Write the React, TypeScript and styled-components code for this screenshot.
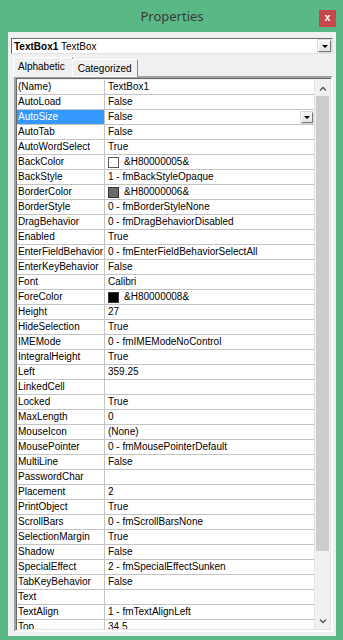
import styled, { createGlobalStyle } from 'styled-components';

const Global = createGlobalStyle`
  html, body { margin: 0; padding: 0; background: #5ab887; }
  * { box-sizing: border-box; }
`;

type Swatch = 'white' | 'gray' | 'black';
type Prop = { name: string; value: string; swatch?: Swatch; selected?: boolean };

const props: Prop[] = [
  { name: '(Name)', value: 'TextBox1' },
  { name: 'AutoLoad', value: 'False' },
  { name: 'AutoSize', value: 'False', selected: true },
  { name: 'AutoTab', value: 'False' },
  { name: 'AutoWordSelect', value: 'True' },
  { name: 'BackColor', value: '&H80000005&', swatch: 'white' },
  { name: 'BackStyle', value: '1 - fmBackStyleOpaque' },
  { name: 'BorderColor', value: '&H80000006&', swatch: 'gray' },
  { name: 'BorderStyle', value: '0 - fmBorderStyleNone' },
  { name: 'DragBehavior', value: '0 - fmDragBehaviorDisabled' },
  { name: 'Enabled', value: 'True' },
  { name: 'EnterFieldBehavior', value: '0 - fmEnterFieldBehaviorSelectAll' },
  { name: 'EnterKeyBehavior', value: 'False' },
  { name: 'Font', value: 'Calibri' },
  { name: 'ForeColor', value: '&H80000008&', swatch: 'black' },
  { name: 'Height', value: '27' },
  { name: 'HideSelection', value: 'True' },
  { name: 'IMEMode', value: '0 - fmIMEModeNoControl' },
  { name: 'IntegralHeight', value: 'True' },
  { name: 'Left', value: '359.25' },
  { name: 'LinkedCell', value: '' },
  { name: 'Locked', value: 'True' },
  { name: 'MaxLength', value: '0' },
  { name: 'MouseIcon', value: '(None)' },
  { name: 'MousePointer', value: '0 - fmMousePointerDefault' },
  { name: 'MultiLine', value: 'False' },
  { name: 'PasswordChar', value: '' },
  { name: 'Placement', value: '2' },
  { name: 'PrintObject', value: 'True' },
  { name: 'ScrollBars', value: '0 - fmScrollBarsNone' },
  { name: 'SelectionMargin', value: 'True' },
  { name: 'Shadow', value: 'False' },
  { name: 'SpecialEffect', value: '2 - fmSpecialEffectSunken' },
  { name: 'TabKeyBehavior', value: 'False' },
  { name: 'Text', value: '' },
  { name: 'TextAlign', value: '1 - fmTextAlignLeft' },
  { name: 'Top', value: '34.5' },
];

const Window = styled.div`
  width: 343px;
  height: 640px;
  background: #5ab887;
  display: flex;
  flex-direction: column;
  overflow: hidden;
  font-family: "Liberation Sans", Arial, sans-serif;
`;

const TitleBar = styled.div`
  flex: none;
  height: 32px;
  display: grid;
  grid-template-columns: 1fr auto 1fr;
  align-items: center;
  padding: 0 7px 0 8px;
`;

const Title = styled.div`
  grid-column: 2;
  font-family: "Noto Sans", "Open Sans", sans-serif;
  font-size: 13px;
  color: #3a3a3a;
`;

const CloseButton = styled.div`
  grid-column: 3;
  justify-self: end;
  width: 17px;
  height: 17px;
  margin-top: 4px;
  background: #c9474c;
  color: #fff;
  font: bold 10px "Liberation Sans", Arial, sans-serif;
  display: flex;
  align-items: center;
  justify-content: center;
  padding-bottom: 2px;
`;

const Panel = styled.div`
  flex: 1;
  min-height: 0;
  margin: 0 7px 4px 8px;
  background: #f0f0f0;
  padding: 6px 3px 4px 3px;
  display: flex;
  flex-direction: column;
`;

const Combo = styled.div`
  flex: none;
  height: 16px;
  background: #fff;
  border: 1px solid;
  border-color: #6d6d6d #e3e3e3 #e3e3e3 #6d6d6d;
  display: flex;
  align-items: center;
  font-size: 10px;
  color: #000;
  padding-left: 2px;
`;

const ComboText = styled.span`
  flex: 1;
  white-space: pre;
  b { font-weight: bold; }
`;

const DropButton = styled.div<{ $small?: boolean }>`
  width: ${p => (p.$small ? 12 : 13)}px;
  height: ${p => (p.$small ? 11 : 12)}px;
  margin-right: 1px;
  background: linear-gradient(#f6f6f6, #e4e4e4);
  border: 1px solid;
  border-color: #fff #7a7a7a #7a7a7a #fff;
  box-shadow: 0 0 0 0.5px #b0b0b0;
  display: flex;
  align-items: center;
  justify-content: center;
  &::after {
    content: '';
    border-left: 3px solid transparent;
    border-right: 3px solid transparent;
    border-top: 3px solid #000;
  }
`;

const Tabs = styled.div`
  flex: none;
  height: 23px;
  display: flex;
  align-items: flex-end;
  padding-left: 2px;
  margin-bottom: -1px;
  position: relative;
  z-index: 1;
`;

const Tab = styled.div<{ $active?: boolean }>`
  height: ${p => (p.$active ? 20 : 18)}px;
  padding: ${p => (p.$active ? '3px 7px 0 4px' : '3px 5px 0 5px')};
  background: #f0f0f0;
  border: 1px solid;
  border-bottom: none;
  border-color: #fff #8a8a8a #fff #fff;
  font-size: 10px;
  color: #000;
  margin-right: ${p => (p.$active ? '-1px' : '0')};
  box-shadow: ${p => (p.$active ? 'none' : 'inset 0 -1px 0 #fff')};
`;

const Grid = styled.div`
  flex: 1;
  min-height: 0;
  margin: 0 0 0 3px;
  border: 2px solid;
  border-color: #a0a0a0 #fff #fff #a0a0a0;
  box-shadow: inset 1px 1px 0 #696969, inset -1px -1px 0 #e3e3e3;
  padding: 2px 1px 1px 1px;
  display: flex;
  overflow: hidden;
  background: #f0f0f0;
`;

const Rows = styled.div`
  flex: 1;
  overflow: hidden;
  background: #fff;
  border-right: 1px solid #e3e3e3;
`;

const Row = styled.div`
  height: 15px;
  display: grid;
  grid-template-columns: 88px 1fr;
  border-bottom: 1px solid #c4c4c4;
  font-size: 10px;
  color: #000;
`;

const NameCell = styled.div<{ $selected?: boolean }>`
  border-right: 1px solid #c4c4c4;
  padding-left: 1px;
  line-height: 14px;
  white-space: nowrap;
  overflow: hidden;
  background: ${p => (p.$selected ? '#3399ff' : '#fff')};
  color: ${p => (p.$selected ? '#fff' : '#000')};
`;

const ValueCell = styled.div`
  display: flex;
  align-items: center;
  gap: 5px;
  padding-left: 3px;
  white-space: nowrap;
  overflow: hidden;
`;

const ValueText = styled.span`
  flex: 1;
  line-height: 14px;
`;

const ColorSwatch = styled.span<{ $color: Swatch }>`
  width: 11px;
  height: 11px;
  flex: none;
  border: 1px solid ${p => (p.$color === 'white' ? '#5a5a5a' : '#333')};
  background: ${p => ({ white: '#fff', gray: '#6a6a6a', black: '#000' }[p.$color])};
`;

const ScrollBar = styled.div`
  width: 15px;
  display: flex;
  flex-direction: column;
  background: #f0f0f0;
`;

const ScrollArrow = styled.div`
  flex: none;
  height: 16px;
  display: flex;
  align-items: center;
  justify-content: center;
`;

const Thumb = styled.div`
  flex: none;
  height: 455px;
  margin: 0 1px;
  background: #cdcdcd;
`;

const Track = styled.div`
  flex: 1;
`;

function Chevron({ up }: { up?: boolean }) {
  return (
    <svg width="8" height="5" viewBox="0 0 8 5">
      <path
        d={up ? 'M1 4.5 L4 1.5 L7 4.5' : 'M1 0.5 L4 3.5 L7 0.5'}
        fill="none"
        stroke="#555"
        strokeWidth="1.3"
      />
    </svg>
  );
}

export default function App() {
  return (
    <>
      <Global />
      <Window>
        <TitleBar>
          <Title>Properties</Title>
          <CloseButton>x</CloseButton>
        </TitleBar>
        <Panel>
          <Combo>
            <ComboText>
              <b>TextBox1</b> TextBox
            </ComboText>
            <DropButton />
          </Combo>
          <Tabs>
            <Tab $active>Alphabetic</Tab>
            <Tab>Categorized</Tab>
          </Tabs>
          <Grid>
            <Rows>
              {props.map(p => (
                <Row key={p.name}>
                  <NameCell $selected={p.selected}>{p.name}</NameCell>
                  <ValueCell>
                    {p.swatch && <ColorSwatch $color={p.swatch} />}
                    <ValueText>{p.value}</ValueText>
                    {p.selected && <DropButton $small />}
                  </ValueCell>
                </Row>
              ))}
            </Rows>
            <ScrollBar>
              <ScrollArrow>
                <Chevron up />
              </ScrollArrow>
              <Thumb />
              <Track />
              <ScrollArrow>
                <Chevron />
              </ScrollArrow>
            </ScrollBar>
          </Grid>
        </Panel>
      </Window>
    </>
  );
}
